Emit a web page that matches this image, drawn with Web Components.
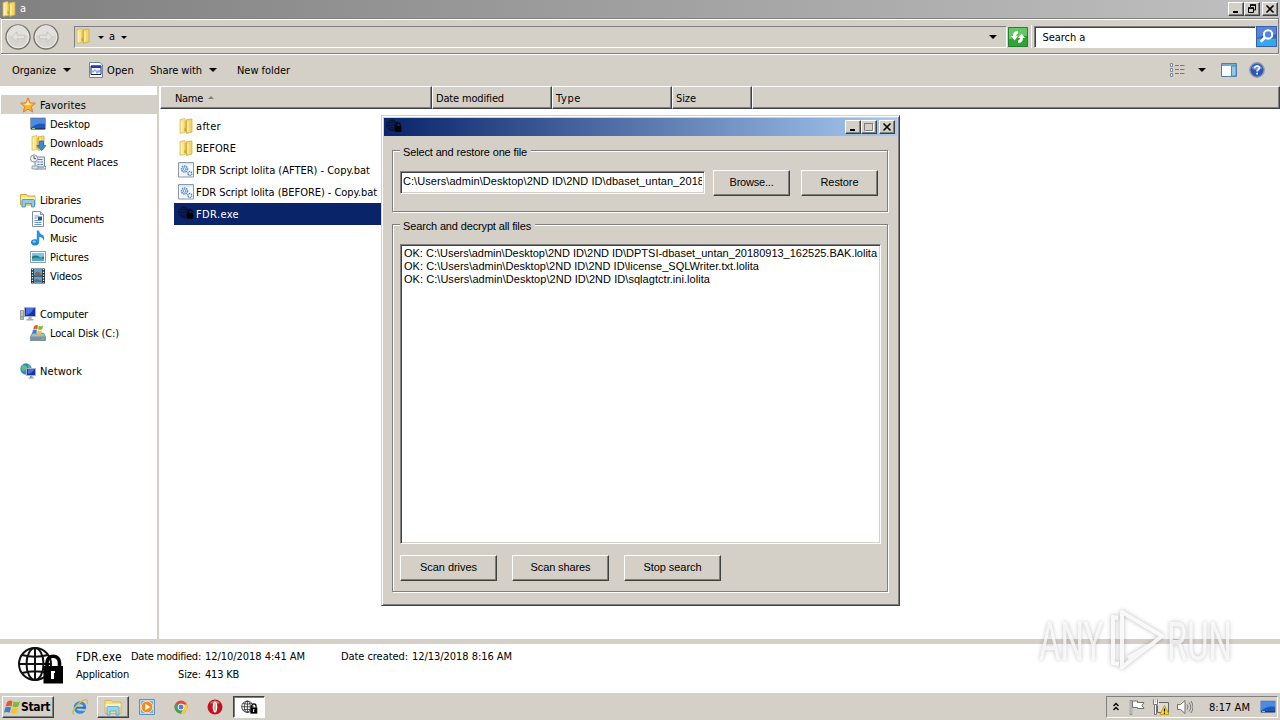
<!DOCTYPE html>
<html lang="en">
<head>
<meta charset="utf-8">
<title>a</title>
<style>
html,body{margin:0;height:100%;overflow:hidden}
body{width:1280px;height:720px;background:#d4d0c8;color:#000;font:11px/14px "DejaVu Sans Condensed","DejaVu Sans",sans-serif;font-stretch:condensed}
</style>
</head>
<body>
<desktop-screen></desktop-screen>
<script>
const folder='<path d="M2 1.500 7 .5v14l-5 .8z" fill="#f9e48e" stroke="#d8b64a" stroke-width=".7"/><path d="M7 2.500h4v12H7z" fill="#e3bd45"/><path d="M8.500 1.500 14 1v13l-5.500 1.500z" fill="#f3d56c" stroke="#cda632" stroke-width=".7"/><path d="M3.500 3v11M10 3.500v10" stroke="#fff4b8" stroke-width="1.200"/><path d="M6.500 10h1.500v3H6.500z" fill="#bfa347"/>';
const winflag='<path d="M3 2.500q3-2 5-.5L7 7Q4 5.500 1.500 7z" fill="#e8572a"/><path d="M9 2.300q3 1.500 6-.3l-1.500 5q-2.500 1.500-5.500 0z" fill="#7fb93a"/><path d="M1.200 8q2.500-1.500 5.500 0l-1.400 5Q3 11.500 0 13z" fill="#3f7fd4"/><path d="M7.700 8.200q3 1.500 5.500 0l-1.400 5q-2.500 1.500-5.500 0z" fill="#f6c22b"/>';
const monitor='<path d="M.5 2h15v11H.5z" fill="#2158b8" stroke="#8e9fb8"/><path d="M1 3h14v5Q7 6 1 12z" fill="#4c8be4"/><path d="M1 12h14v1.500H1z" fill="#233a63"/><path d="M2 12.500h3" stroke="#8ad07a"/>';
const globeLock=(c,w=2)=>`<g fill="none" stroke="${c}" stroke-width="${w}"><circle cx="18" cy="19" r="16"/><ellipse cx="18" cy="19" rx="8.500" ry="16"/><path d="M18 3v32M2 19h32M5 10q13 3.500 26 0M5 28q13-3.500 26 0"/></g>`;
const lock='<path d="M26.500 21h19.500v17.500H26.500z"/><path d="M30 22v-4.500a6.200 6.200 0 0 1 12.500 0V22" fill="none" stroke="#000" stroke-width="3.600"/>';
const ICONS={
folder:[16,folder],
star:[16,'<path d="M8 .8l2.100 5 5.300.4-4 3.500 1.200 5.300L8 12.200 3.400 15l1.200-5.300-4-3.500 5.300-.4z" fill="#f8b530" stroke="#d9822b"/><path d="M8 3l1.300 3.600 3 .3-4 1.500-4.600-1 2.800-.8z" fill="#ffe98d"/>'],
desktop:[16,monitor],
downloads:[16,folder+'<path d="M9.500 6h4v4.500H16L11.500 15.500 7 10.500h2.500z" fill="#2e8fe0" stroke="#1660a8" stroke-width=".7"/>'],
recent:[16,'<path d="M5 3h9.500v9.500H16V15H5z" fill="#e9eef3" stroke="#74879b"/><path d="M7.500 5.500h5M7.500 8h2m1 0h2.500M7.500 10.500h2m1 0h2.500M6 13h8" stroke="#5a7fa6"/><circle cx="4" cy="4.500" r="3.600" fill="#f1f4f7" stroke="#8494a5"/><path d="M4 2v2.700h2" stroke="#556" fill="none"/><path d="M2 12h6v3H2z" fill="#dce3ea" stroke="#8494a5" stroke-width=".8"/>'],
libraries:[16,'<path d="M.5 2.500h6l1 1.500h7.500v9H.5z" fill="#f6df80" stroke="#cfa93a"/><path d="M1 5.500h14v3H1z" fill="#fdf3b4"/><path d="M2 15V8.500q0-1 1-1h10.500q1 0 1 1V15h-3v-3.500h-6V15z" fill="#8ccbec" stroke="#3c8cb8" stroke-width=".8"/>'],
documents:[16,'<path d="M2.500.5h8l3 3v12h-11z" fill="#fff" stroke="#7d8ea5"/><path d="M10.500.5v3h3" fill="#cfd9e6" stroke="#7d8ea5"/><path d="M4.500 5h4M4.500 7h3M4.500 9.500h7M4.500 11.500h7M4.500 13.500h7" stroke="#6b94c9"/><path d="M8 5.500h4V9H8z" fill="#27569a"/>'],
music:[16,'<ellipse cx="5" cy="12.300" rx="4" ry="3.100" fill="#1c83d8"/><ellipse cx="4.300" cy="11.600" rx="1.800" ry="1.200" fill="#8ed0f6"/><path d="M6.800 12V.5h2.400q0 3 3 4.200t1.500 6.300q-.7-4-4.500-4V12z" fill="#2a92e2"/>'],
pictures:[16,'<path d="M.5 2.500h15v11H.5z" fill="#fff" stroke="#8e9aa6"/><path d="M2 4h12v8H2z" fill="#7cc6ec"/><path d="M2 7.500q4-2 7 0t5-.5V10H2z" fill="#2c7a63"/><path d="M2 9.500q6-1.500 12 .5v2H2z" fill="#4aa7c9"/>'],
videos:[16,'<path d="M1 .5h14v15H1z" fill="#26323e"/><path d="M4 1h8v6.500H4zM4 8.500h8V15H4z" fill="#4fa5d8"/><path d="M5 5q3-3 6 1v1.500H5zM4 12l3-1 5 2v1H4z" fill="#8a6250"/><path d="M2.500 1v14M13.500 1v14" stroke="#fff" stroke-width="1.300" stroke-dasharray="1.300 1.400"/>'],
computer:[16,'<path d="M.5 4.500h3v9h-3z" fill="#b9c4c3" stroke="#7f8d93" stroke-width=".8"/><path d="M1.500 10h1v2h-1z" fill="#52b04d"/><path d="M4.500 1.500h11v9h-11z" fill="#1730ac" stroke="#aab1c2"/><path d="M6 2h8q-2 5-7 7H6z" fill="#4a6fe2"/><path d="M8.500 11h3v2h2v1.500h-7V13h2z" fill="#a5adb9"/>'],
disk:[16,'<path d="M2.500 8h11l2 3.500v4H.5v-4z" fill="#a9bac6" stroke="#63737f" stroke-width=".7"/><path d="M1 11.500h14V15H1z" fill="#7a93a3"/><path d="M11.500 13h2.500v1h-2.500z" fill="#5be05b"/><g transform="translate(2 -1) scale(.75)">'+winflag+'</g>'],
network:[16,'<circle cx="6" cy="6" r="5.700" fill="#278dd0"/><path d="M2 2q4 0 5 2T3.500 8Q0 7 2 2zM8 1l3 3-2 3z" fill="#67bf6b"/><path d="M6.500 5.500h9v7h-9z" fill="#1730ac" stroke="#aab1c2"/><path d="M8 6h6.500q-2 4-6 5H8z" fill="#4a6fe2"/><path d="M10 13h2.500v1.500H14v1H8.500v-1H10z" fill="#8e96a6"/>'],
bat:[16,'<path d="M.5.500h15v14.500H.5z" fill="#f3f8fc" stroke="#8b98a6"/><path d="M1 1h14v1.500H1z" fill="#d8e4ee"/><circle cx="6.500" cy="7" r="3" fill="#e2eefa" stroke="#5b8ec0" stroke-width="1.600" stroke-dasharray="1.500 .7"/><circle cx="6.500" cy="7" r="1.300" fill="#fff" stroke="#6b98c8"/><circle cx="11.800" cy="11.500" r="1.900" fill="#fff" stroke="#4f86bd" stroke-width="1.500" stroke-dasharray="1.200 .6"/>'],
open:[16,'<path d="M1.500.5h10.500l2.500 2.500v12.500h-13z" fill="#fff" stroke="#77838f"/><path d="M3 4h10v8.500H3z" fill="#fff" stroke="#102080"/><path d="M3 3.500h10v2.500H3z" fill="#1840b0"/><path d="M5 8.500v2M7 7.500v2m2-1v3M11 8v2.500" stroke="#2a50c0"/>'],
exe:[48,globeLock('#08102c',2.400)+lock],
exe2:[48,globeLock('#111')+lock+'<path d="M34 26h4v2h-1v6h-3v-6z" fill="#fff"/>'],
refresh:[20,'<path d="M0 0h20v20H0z" fill="#2fa336"/><path d="M0 0h20v9Q10 8 0 13z" fill="#63c765"/><path d="M.5.5h19v19H.5z" fill="none" stroke="#2a7d31"/><path d="M3 9h2q0-5 5-5v2.500Q8 7 8 9h2l-3.500 4.500zM17 11h-2q0 5-5 5v-2.500q2-.5 2-2.500h-2l3.500-4.500z" fill="#fff"/>'],
search:[20,'<path d="M0 0h20v20H0z" fill="#2f62d2"/><path d="M0 12h20v8H0z" fill="#35a8ea"/><path d="M0 0h20v8Q9 7 0 12z" fill="#5b82e0"/><path d="M.5.5h19v19H.5z" fill="none" stroke="#3c60a8"/><circle cx="11.500" cy="8" r="4" fill="#4f86e4" stroke="#fff" stroke-width="2"/><path d="M8.500 11 4.500 15" stroke="#fff" stroke-width="2.500"/>'],
views:[16,'<g fill="#fff" stroke="#7b8794"><path d="M.5 1.500h2v3h-2zM.5 6.500h2v3h-2zM.5 11.500h2v3h-2z"/></g><path d="M5 3.500h4M10 3.500h4.500M5 7.500h4M10 7.500h4.500M5 11.500h4M10 11.500h4.500" stroke="#6d7c8d"/>'],
pane:[16,'<path d="M.5 1.500h15v13H.5z" fill="#fff" stroke="#527ba5"/><path d="M1 2h14v2H1z" fill="#78a7cf"/><path d="M10.500 4H15v10h-4.500z" fill="#8fcbe8" stroke="#5488b4"/>'],
help:[16,'<circle cx="8" cy="8" r="7.200" fill="#2c55bc" stroke="#8d99ae" stroke-width="1.400"/><path d="M2.500 6Q8 0 13.500 6q-6 4-11 0z" fill="#6f97e4"/><path d="M5.700 6.200Q6 3.900 8.200 4q2.300.1 2.200 2 0 1-1.200 1.700-1.100.6-1.100 1.800M8.100 10.800v1.700" stroke="#fff" stroke-width="1.700" fill="none"/>'],
winflag:[16,winflag],
ie:[16,'<circle cx="8" cy="8.500" r="4.800" fill="none" stroke="#2b8fe0" stroke-width="3"/><path d="M4 8.700h9" stroke="#1d74c8" stroke-width="2"/><path d="M9.500 10.200h6v1.500h-6z" fill="#d4d0c8"/><path d="M2 15.500Q-1 13 5 6.500T15 1q1.500 1 0 4" fill="none" stroke="#e7b92c" stroke-width="1.500"/>'],
explorer:[18,'<path d="M1 2.500h6.500l1 1.500H17v11.500H1z" fill="#f6df80" stroke="#d5b13f" stroke-width=".8"/><path d="M1.500 6h15v3h-15z" fill="#fdf3b4"/><path d="M3 17V9.500q0-1 1-1h10q1 0 1 1V17h-3v-4H6v4z" fill="#9bd3ee" stroke="#5ba3c9" stroke-width=".8"/>'],
media:[16,'<path d="M.5.500h15v15H.5z" fill="#bcd9f0" stroke="#5b93c6"/><path d="M2 2h12v12H2z" fill="#7fb1dc"/><circle cx="8" cy="8" r="5.800" fill="#f58a14" stroke="#fff3dd" stroke-width=".8"/><path d="M6.300 4.700 11.300 8l-5 3.300z" fill="#fff"/>'],
chrome:[16,'<circle cx="8" cy="8" r="6.500" fill="#e2493b"/><path d="M2.400 4.800A6.500 6.500 0 0 0 8 14.500L10.500 9.500 8 8z" fill="#3ba558"/><path d="M8 14.500A6.500 6.500 0 0 0 14 5.500H8L10.500 9.500z" fill="#f8cd3c"/><circle cx="8" cy="8" r="3" fill="#4484ea" stroke="#fff"/>'],
opera:[16,'<circle cx="8" cy="8" r="7.500" fill="#c0151c"/><path d="M3 4q5-5 10 0-5 2-10 0z" fill="#e76a66"/><ellipse cx="8" cy="8" rx="2.300" ry="5.500" fill="#fff"/><ellipse cx="8" cy="8" rx="1" ry="4.300" fill="#c9b2b2"/>'],
chev:[10,'<path d="M2.500 4 5 1.500l2.500 2.500M2.500 8 5 5.500l2.500 2.500" fill="none" stroke="#000" stroke-width="1.400"/>'],
flag:[16,'<path d="M2 1v15" stroke="#6d6d6d" stroke-width="2.400"/><path d="M2 1.500v14" stroke="#fff"/><path d="M3.500 2h5v1.500H15l-2 3 2 3H8.500V8.500h-5z" fill="#fff" stroke="#707070"/>'],
net:[16,'<path d="M4.500 3.500h11v10h-11z" fill="#dcdcd4" stroke="#666"/><path d="M.5 1v4h4V1M2.500 5v10.500" stroke="#fff" stroke-width="2.400" fill="none"/><path d="M.5.5v5h4v-5M1.500 6v9.500h2V6" stroke="#555" fill="none" stroke-width=".8"/><path d="M11.500 6.500 16 15.500H7z" fill="#ffdc28" stroke="#b58f00" stroke-width=".8"/><path d="M11.500 9.500v3m0 1v1.200" stroke="#000" stroke-width="1.200"/>'],
sound:[16,'<path d="M.5 5.500h3L8 1.500v13l-4.500-4h-3z" fill="#fff" stroke="#6d6d6d"/><path d="M10 5.500q2 2.500 0 5M12 3.500q3.500 4.500 0 9M14 2q4 6 0 12" fill="none" stroke="#777"/>'],
back:[26,'<circle cx="13" cy="13" r="12" fill="#d6d4cf" stroke="#77746f" stroke-width="1.400"/><circle cx="13" cy="13" r="10.700" fill="none" stroke="#f2f0ec"/><path d="M3 11a10 10 0 0 1 20 0q-10 4-20 0z" fill="#e2e0dc"/><path d="M6.500 13 12 7.800v3.400h7.500v3.600H12v3.400z" fill="#e3e1dd" stroke="#c4c0ba" stroke-width=".8"/>'],
min:[10,'<path d="M2 7h5v2H2z"/>'],
max:[10,'<path d="M.5 1.500h8v7h-8z" fill="none" stroke="#808080"/><path d="M0 1h9v1H0z" fill="#808080"/><path d="M9.500 2v7.500H1" fill="none" stroke="#fff"/>'],
restore:[10,'<path d="M3.500 1h5v5h-2M3.500 1v2" fill="none" stroke="#000"/><path d="M3 .3h6v1.500H3z"/><path d="M1.500 4h5v4.500h-5z" fill="none" stroke="#000"/><path d="M1 3.300h6v1.500H1z"/>'],
close:[10,'<path d="M1.500 1.500 8.500 8.500M8.500 1.500 1.500 8.500" stroke="#000" stroke-width="1.600"/>']
};
ICONS.forward=[26,`<g transform="matrix(-1 0 0 1 26 0)">${ICONS.back[1]}</g>`];

class Base extends HTMLElement{
  connectedCallback(){
    if(this.shadowRoot)return;
    const r=this.attachShadow({mode:'open'});
    const t=document.createElement('template');
    t.innerHTML=`<style>*{box-sizing:border-box}${this.css()}</style>${this.html()}`;
    r.append(document.importNode(t.content,true));
    this.ready();
  }
  a(n,d=''){return this.getAttribute(n)??d}
  css(){return ':host{display:block}'}
  html(){return '<slot></slot>'}
  ready(){}
}
const def=(n,c)=>customElements.define(n,c);

/* Single-line label, tracked so that it fills its nominal width. */
def('ui-label',class extends Base{
  css(){return `:host{display:block;flex:none;white-space:pre;width:${this.a('w')}px}span{display:inline-block}`}
  html(){return '<span><slot></slot></span>'}
  ready(){
    const s=this.shadowRoot.querySelector('span'),w=+this.a('w',0);
    if(w)s.style.letterSpacing=((w-s.getBoundingClientRect().width)/this.textContent.length).toFixed(3)+'px';
  }
});
def('ui-icon',class extends Base{
  css(){return `:host{display:block;flex:none;width:${this.a('s',16)}px;height:${this.a('s',16)}px}svg{display:block;width:100%;height:100%}`}
  html(){const i=ICONS[this.a('name')];return `<svg viewBox="0 0 ${i[0]} ${i[0]}">${i[1]}</svg>`}
});
def('drop-arrow',class extends Base{
  css(){const s=+this.a('s',4);return `:host{display:block;flex:none;border:${s}px solid transparent;border-top-color:#000;border-bottom:0}`}
});
def('caption-button',class extends Base{
  css(){return `:host{display:flex;flex:none;width:16px;height:14px;padding:1px 0 0 2px;background:#d4d0c8;border:1px solid;border-color:#fff #404040 #404040 #fff;box-shadow:inset -1px -1px #808080;box-sizing:border-box}`}
  html(){return `<ui-icon name="${this.a('icon')}" s="10"></ui-icon>`}
});
def('push-button',class extends Base{
  css(){return `:host{display:flex;flex:none;align-items:center;justify-content:center;box-sizing:border-box;width:${this.a('w')}px;height:26px;padding-bottom:1px;background:#d4d0c8;border:1px solid;border-color:#fff #404040 #404040 #fff;box-shadow:inset -1px -1px #808080}`}
});
def('title-bar',class extends Base{
  css(){return `:host{display:flex;flex:none;align-items:center;height:18px;color:#fff;padding:0 2px 0 1px;gap:3px;background:linear-gradient(90deg,var(--from),var(--to))}
  .b{margin-left:auto;display:flex}.b :last-child{margin-left:2px}`}
  html(){return `<slot></slot><div class="b"><caption-button icon="min"></caption-button><caption-button icon="${this.a('mid')}"></caption-button><caption-button icon="close"></caption-button></div>`}
});
def('address-bar',class extends Base{
  css(){return `:host{display:flex;flex:none;height:36px;box-sizing:border-box;border:1px solid #808080;border-left:0;border-right-color:#808080;box-shadow:inset 1px 1px #fff,0 1px #fff;padding:5px 1px 0 3px;margin:0 1px 0 1px}
  .nav{display:flex;gap:2px;margin-right:15px;padding-left:1px}
  .addr{display:flex;align-items:center;width:935px;height:22px;margin-top:2px;border:1px solid;border-color:#808080 #fff #fff #808080;padding-right:3px}
  .sep{width:3px;margin:1px 2px 5px 1px;border-right:1px solid #fff}
  .q{width:222px;height:22px;margin-top:2px;background:#fff;border:1px solid;border-color:#808080 #fff #fff #808080;box-shadow:inset 1px 1px #404040;padding:4px 0 0 7px}
  .go{margin:2px 0 0 0}`}
  html(){return `<div class="nav"><ui-icon name="back" s="26"></ui-icon><ui-icon name="forward" s="26"></ui-icon></div>
  <div class="addr"><ui-icon name="folder" style="margin-top:-3px"></ui-icon><drop-arrow s="3" style="margin:0 5px 0 7px"></drop-arrow><ui-label w="7">a</ui-label><drop-arrow s="3" style="margin-left:5px"></drop-arrow><drop-arrow s="4" style="margin:0 6px 0 auto"></drop-arrow></div>
  <ui-icon name="refresh" s="20" style="margin:3px 0 0 1px"></ui-icon><div class="sep"></div>
  <div class="q"><ui-label w="43">Search a</ui-label></div><ui-icon class="go" name="search" s="21"></ui-icon>`}
});
def('command-bar',class extends Base{
  css(){return `:host{display:flex;flex:none;height:32px;align-items:center;padding:0 15px 0 12px}.r{margin-left:auto;display:flex;align-items:center}ui-label{position:relative;top:1px}`}
  html(){return `<ui-label w="44">Organize</ui-label><drop-arrow style="margin:0 17px 0 7px"></drop-arrow><ui-icon name="open"></ui-icon><ui-label w="27" style="margin:0 16px 0 3px">Open</ui-label><ui-label w="52">Share with</ui-label><drop-arrow style="margin:0 20px 0 7px"></drop-arrow><ui-label w="53">New folder</ui-label>
  <div class="r"><ui-icon name="views"></ui-icon><drop-arrow style="margin:0 15px 0 12px"></drop-arrow><ui-icon name="pane"></ui-icon><ui-icon name="help" style="margin-left:12px"></ui-icon></div>`}
});
def('nav-item',class extends Base{
  css(){return `:host{display:flex;height:19px;box-sizing:border-box;align-items:center;gap:4px;margin-left:1px;padding-left:${this.hasAttribute('root')?19:29}px}:host([on]){background:#d4d0c8}:host([gap]){margin-top:19px}ui-label{margin-top:2px}`}
  html(){return `<ui-icon name="${this.a('icon')}"></ui-icon><ui-label w="${this.a('w')}">${this.textContent}</ui-label>`}
});
def('nav-pane',class extends Base{
  css(){return `:host{display:block;flex:none;width:157px;background:#fff;padding-top:9px;box-sizing:border-box}`}
});
def('column-head',class extends Base{
  css(){return `:host{display:flex;flex:none;box-sizing:border-box;height:23px;width:${this.a('w')}px;align-items:center;gap:5px;border:solid;border-width:1px 1px 1px 1px;border-color:#fff #404040 #404040 #fff;box-shadow:inset -1px -1px #808080;padding:2px 0 0 ${this.a('pad',3)}px}:host([fill]){flex:1}i{border:3px solid transparent;border-top:0;border-bottom-color:#808080;margin-bottom:3px}`}
  html(){return '<slot></slot>'+(this.hasAttribute('sorted')?'<i></i>':'')}
});
def('file-row',class extends Base{
  css(){return `:host{display:flex;height:22px;width:230px;box-sizing:border-box;align-items:center;gap:2px;padding-left:4px;margin-left:14px}:host([selected]){background:#0a246a;color:#fff}ui-label{margin-top:1px}ui-icon{margin-top:-1px}`}
  html(){return `<ui-icon name="${this.a('icon')}"></ui-icon><ui-label w="${this.a('w')}">${this.textContent}</ui-label>`}
});
def('file-list',class extends Base{
  css(){return `:host{display:block;flex:1;background:#fff;min-width:0}.h{display:flex;background:#d4d0c8;margin-bottom:6px}`}
  html(){return `<div class="h"><column-head w="272" pad="14" sorted><ui-label w="28">Name</ui-label></column-head><column-head w="120"><ui-label w="68">Date modified</ui-label></column-head><column-head w="120"><ui-label w="25">Type</ui-label></column-head><column-head w="80"><ui-label w="20">Size</ui-label></column-head><column-head fill></column-head></div>
  <file-row icon="folder" w="25">after</file-row><file-row icon="folder" w="40">BEFORE</file-row><file-row icon="bat" w="174">FDR Script lolita (AFTER) - Copy.bat</file-row><file-row icon="bat" w="181">FDR Script lolita (BEFORE) - Copy.bat</file-row><file-row icon="exe" w="43" selected>FDR.exe</file-row>`}
});
def('details-pane',class extends Base{
  css(){return `:host{display:flex;flex:none;height:53px;box-sizing:border-box;border-top:5px solid #d4d0c8;background:#fff;padding:0 0 0 17px}
  .g{display:grid;grid-template-columns:55px 74px 136px 71px 110px;grid-auto-rows:18px;padding:4px 0 0 11px;align-items:center}
  .s{justify-self:end;margin-right:4px}`}
  html(){return `<ui-icon name="exe2" s="48" style="margin-top:1px"></ui-icon><div class="g"><ui-label w="46" style="font-size:12px">FDR.exe</ui-label><ui-label class="s" w="70">Date modified:</ui-label><ui-label w="100">12/10/2018 4:41 AM</ui-label><ui-label w="67">Date created:</ui-label><ui-label w="100">12/13/2018 8:16 AM</ui-label>
  <ui-label w="53">Application</ui-label><ui-label class="s" w="23">Size:</ui-label><ui-label w="34">413 KB</ui-label></div>`}
});
def('group-box',class extends Base{
  css(){return `:host{display:block;box-sizing:border-box;height:${this.a('h')}px;border:1px solid #808080;box-shadow:inset 1px 1px #fff,1px 1px #fff}
  .l{display:block;width:max-content;height:14px;margin:-6px 0 0 7px;padding:1px 4px 0 3px;background:#d4d0c8}`}
  html(){return `<div class="l"><ui-label w="${this.a('w')}">${this.a('label')}</ui-label></div><slot></slot>`}
});
def('sunken-field',class extends Base{
  css(){return `:host{display:block;flex:none;box-sizing:border-box;background:#fff;border:1px solid;border-color:#808080 #fff #fff #808080;box-shadow:inset 1px 1px #404040,inset -1px -1px #d4d0c8;width:${this.a('w')}px;height:${this.a('h')}px;padding:${this.a('pad')}}div{overflow:hidden}`}
  html(){return '<div><slot></slot></div>'}
});
def('restore-dialog',class extends Base{
  css(){return `:host{display:block;position:absolute;left:381px;top:115px;width:519px;height:491px;box-sizing:border-box;background:#d4d0c8;border:1px solid;border-color:#d4d0c8 #404040 #404040 #d4d0c8;box-shadow:inset 1px 1px #fff,inset -1px -1px #808080;padding:2px;font:11px/13px "Liberation Sans",Arial,sans-serif}
  title-bar{--from:#0a246a;--to:#a6caf0}
  .c{padding:14px 9px 0 8px}
  .r{display:flex}
  group-box+group-box{margin-top:12px}`}
  html(){return `<title-bar mid="max"><ui-icon name="exe" style="margin-left:1px"></ui-icon></title-bar>
  <div class="c"><group-box label="Select and restore one file" w="124" h="62"><div class="r" style="margin:11px 0 0 7px"><sunken-field w="305" h="23" pad="3px 2px 0 2px" style="margin-top:1px"><ui-label w="301">C:\\Users\\admin\\Desktop\\2ND ID\\2ND ID\\dbaset_untan_2018</ui-label></sunken-field><push-button w="77" style="margin:0 11px 0 8px"><ui-label w="44">Browse...</ui-label></push-button><push-button w="77"><ui-label w="38">Restore</ui-label></push-button></div></group-box>
  <group-box label="Search and decrypt all files" w="128" h="368"><div style="margin:11px 0 11px 7px"><sunken-field w="481" h="300" pad="2px 0 0 3px"><ui-label w="473">OK: C:\\Users\\admin\\Desktop\\2ND ID\\2ND ID\\DPTSI-dbaset_untan_20180913_162525.BAK.lolita</ui-label><ui-label w="355">OK: C:\\Users\\admin\\Desktop\\2ND ID\\2ND ID\\license_SQLWriter.txt.lolita</ui-label><ui-label w="306">OK: C:\\Users\\admin\\Desktop\\2ND ID\\2ND ID\\sqlagtctr.ini.lolita</ui-label></sunken-field></div>
  <div class="r" style="gap:15px;margin-left:7px"><push-button w="97"><ui-label w="57">Scan drives</ui-label></push-button><push-button w="97"><ui-label w="60">Scan shares</ui-label></push-button><push-button w="97"><ui-label w="58">Stop search</ui-label></push-button></div></group-box></div>`}
});
def('task-button',class extends Base{
  css(){return `:host{display:flex;flex:none;align-items:center;justify-content:center;box-sizing:border-box;width:32px;height:22px}
  :host([up]){border:1px solid;border-color:#fff #404040 #404040 #fff;box-shadow:inset -1px -1px #808080}
  :host([down]){border:1px solid;border-color:#404040 #fff #fff #404040;box-shadow:inset 1px 1px #808080;background:#fdfdfc}`}
});
def('task-bar',class extends Base{
  css(){return `:host{display:flex;flex:none;height:28px;box-sizing:border-box;border-top:1px solid #fff;padding:3px 2px 0 2px;align-items:flex-start}
  .start{width:52px;justify-content:flex-start;gap:0;padding-left:1px;font:bold 12px/14px "DejaVu Sans Condensed","DejaVu Sans",sans-serif;margin-right:10px}
  .tray{display:flex;align-items:center;margin-left:auto;width:172px;height:22px;box-sizing:border-box;border:1px solid;border-color:#808080 #fff #fff #808080;padding-left:4px}`}
  html(){return `<task-button up class="start"><ui-icon name="winflag" s="17"></ui-icon><ui-label w="29">Start</ui-label></task-button>
  <task-button><ui-icon name="ie"></ui-icon></task-button><task-button up style="margin:0 2px 0 1px"><ui-icon name="explorer" s="18"></ui-icon></task-button><task-button><ui-icon name="media"></ui-icon></task-button><task-button style="margin:0 2px"><ui-icon name="chrome"></ui-icon></task-button><task-button><ui-icon name="opera"></ui-icon></task-button><task-button down style="margin-left:2px"><ui-icon name="exe2" s="17" style="margin-top:3px"></ui-icon></task-button>
  <div class="tray"><ui-icon name="chev" s="10"></ui-icon><ui-icon name="flag" style="margin-left:8px"></ui-icon><ui-icon name="net" style="margin-left:8px"></ui-icon><ui-icon name="sound" style="margin-left:8px"></ui-icon><ui-label w="41" style="margin:1px 10px 0 16px">8:17 AM</ui-label><ui-icon name="desktop"></ui-icon></div>`}
});
def('water-mark',class extends Base{
  css(){return `:host{display:block;position:absolute;left:1030px;top:600px;width:240px;height:90px}svg{display:block;overflow:visible;filter:drop-shadow(0 0 2px rgba(0,0,0,.32))}
  text{font:53px/60px Roboto,sans-serif}`}
  html(){return `<svg width="240" height="90" fill="#fff" fill-opacity=".75"><g transform="translate(9 60) scale(.62 1)"><text>ANY</text></g><g transform="translate(137 60) scale(.62 1)"><text>RUN</text></g><path d="M88 18l-5-1v46l6 1M92 69V12l40 24-41 32M92 12v40M98 58l26-15" fill="none" stroke="#fff" stroke-opacity=".85" stroke-width="4" stroke-linejoin="round"/></svg>`}
});
def('desktop-screen',class extends Base{
  css(){return `:host{display:flex;flex-direction:column;width:1280px;height:720px;background:#d4d0c8;position:relative;overflow:hidden}
  title-bar{--from:#808080;--to:#c0c0c0}
  .m{display:flex;flex:1;min-height:0}.s{width:3px;background:linear-gradient(90deg,#d4d0c8 2px,#fff 2px);flex:none}`}
  html(){return `<title-bar mid="restore"><ui-icon name="folder"></ui-icon><ui-label w="7">a</ui-label></title-bar><address-bar></address-bar><command-bar></command-bar>
  <div class="m"><nav-pane><nav-item root on icon="star" w="46">Favorites</nav-item><nav-item icon="desktop" w="40">Desktop</nav-item><nav-item icon="downloads" w="53">Downloads</nav-item><nav-item icon="recent" w="68">Recent Places</nav-item>
  <nav-item root gap icon="libraries" w="41">Libraries</nav-item><nav-item icon="documents" w="54">Documents</nav-item><nav-item icon="music" w="27">Music</nav-item><nav-item icon="pictures" w="39">Pictures</nav-item><nav-item icon="videos" w="32">Videos</nav-item>
  <nav-item root gap icon="computer" w="48">Computer</nav-item><nav-item icon="disk" w="69">Local Disk (C:)</nav-item><nav-item root gap icon="network" w="42">Network</nav-item></nav-pane><div class="s"></div><file-list></file-list></div>
  <details-pane></details-pane><task-bar></task-bar><restore-dialog></restore-dialog><water-mark></water-mark>`}
});
</script>
</body>
</html>
